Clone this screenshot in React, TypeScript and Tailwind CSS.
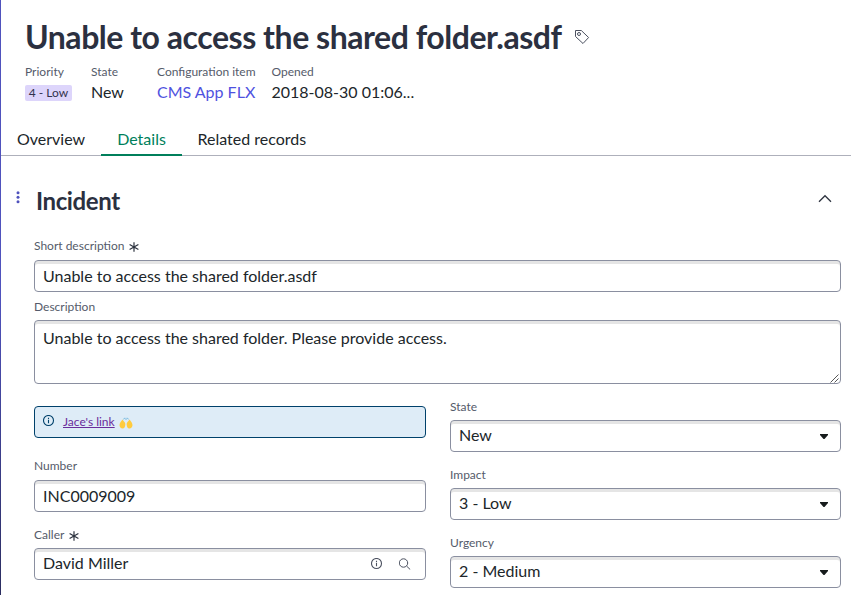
import type { ReactNode } from 'react';

function Required() {
  return (
    <svg width="10" height="10" viewBox="0 0 10 10" className="ml-[4.5px] mt-[2px] shrink-0" fill="none" stroke="#2e3440" strokeWidth="1.2">
      <path d="M5 .2v9.6M.6 2.4l8.8 5.2M9.4 2.4L.6 7.6" />
    </svg>
  );
}

function InfoIcon({ className }: { className: string }) {
  return (
    <svg width="12" height="12" viewBox="0 0 12 12" className={className} fill="none" stroke="currentColor">
      <circle cx="5.5" cy="5.5" r="5" strokeWidth="1.1" />
      <path d="M5.5 4.8v3.4M5.5 2.8v1.200" strokeWidth="1.1" />
    </svg>
  );
}

function Label({ children, required }: { children: ReactNode; required?: boolean }) {
  return (
    <div className="flex h-[14px] items-center text-[12px] leading-[14px] text-[#555b6a]">
      <span>{children}</span>
      {required && <Required />}
    </div>
  );
}

const box = 'flex w-full rounded-[4px] border border-[#8a8fa0] bg-white px-[8px] text-[16px] leading-[30px] text-[#20262a] shadow-[inset_0_3px_0_#e5e5e5]';

function Select({ label, value }: { label: string; value: string }) {
  return (
    <div className="h-[68px]">
      <Label>{label}</Label>
      <div className={`${box} mt-[6px] h-[32px] items-center justify-between pr-[12px]`}>
        <span className="-mt-[2px]">{value}</span>
        <svg width="8" height="5" viewBox="0 0 8 5" className="mt-px" fill="#161b1c">
          <path d="M0 0h8v1L4.5 5h-1L0 1z" />
        </svg>
      </div>
    </div>
  );
}

export default function App() {
  return (
    <div className="flex h-[595px] w-[851px] overflow-hidden bg-white font-['Lato','Noto_Sans',sans-serif] text-[#20262a]">
      <div className="w-px shrink-0 bg-linear-to-b from-[#4f52bd] via-[#4f52bd] to-[#2b2d60]" />
      <main className="min-w-0 flex-1">
        <header className="h-[123px] pl-[24px] pt-[17px]">
          <div className="flex h-[40px] items-center">
            <h1 className="w-[549px] whitespace-nowrap text-[32px] font-bold leading-[40px] tracking-[-0.46px] text-[#2b3040]">Unable to access the shared folder.asdf</h1>
            <svg width="16" height="16" viewBox="0 0 16 16" fill="none" stroke="#4b5160">
              <path d="M1.5 1.5h5.800l7.300 7-5.600 6-7.500-7z" strokeLinejoin="round" />
              <circle cx="5" cy="5" r="1.5" />
            </svg>
          </div>
          <div className="flex pt-[8px] text-[16px] leading-[24px]">
            <div className="w-[66px]">
              <Label>Priority</Label>
              <div className="mt-[6px] h-[16px] w-[47px] whitespace-nowrap rounded-[2px] bg-[#ddd5fb] text-center text-[12px] leading-[16px] text-[#32324d]">4 - Low</div>
            </div>
            <div className="w-[66px]"><Label>State</Label><div className="mt-px">New</div></div>
            <div className="w-[114px]"><Label>Configuration item</Label><div className="mt-px whitespace-nowrap text-[#4f52e0]">CMS App FLX</div></div>
            <div className="pl-[0.5px]"><Label>Opened</Label><div className="mt-px">2018-08-30 01:06...</div></div>
          </div>
        </header>
        <nav className="flex h-[33px] border-b border-[#aeb0bb] text-[16px] leading-[31px]">
          <div className="w-[100px] pl-[16px]">Overview</div>
          <div className="h-[33px] w-[81px] border-b-2 border-[#007f5b] text-center text-[#007f5b]">Details</div>
          <div className="pl-[15.5px]">Related records</div>
        </nav>
        <section className="pl-[33px] pr-[10px] pt-[25px]">
          <div className="-ml-[18px] flex h-[40px] items-center">
            <svg width="4" height="13" viewBox="0 0 4 13" className="-mt-[8px] mr-[16px]" fill="#4f52bd">
              <circle cx="2" cy="1.7" r="1.5" /><circle cx="2" cy="6.2" r="1.5" /><circle cx="2" cy="10.7" r="1.5" />
            </svg>
            <h2 className="flex-1 text-[24px] font-bold leading-[40px] tracking-[-0.4px] text-[#2b3040]">Incident</h2>
            <svg width="14" height="9" viewBox="0 0 14 9" className="-mt-[5px] mr-[9px]" fill="none" stroke="#2e3440" strokeWidth="1.3">
              <path d="M1 7.7l6-6 6 6" />
            </svg>
          </div>
          <div className="pt-[18px]">
            <Label required>Short description</Label>
            <div className={`${box} mt-[7px] h-[32px] items-center`}>Unable to access the shared folder.asdf</div>
          </div>
          <div className="pt-[8px]">
            <Label>Description</Label>
            <div className={`${box} mt-[6px] h-[64px] justify-between pr-[1px] pt-[2px]`}>
              <span>Unable to access the shared folder. Please provide access.</span>
              <svg width="9" height="9" viewBox="0 0 9 9" className="self-end" stroke="#444" strokeWidth=".9">
                <path d="M.5 8.5l8-8M4.5 8.5l4-4" />
              </svg>
            </div>
          </div>
          <div className="flex gap-[24px]">
            <div className="w-[392px] pt-[22px]">
              <div className="flex h-[32px] items-center rounded-[4px] border border-[#00416b] bg-[#deecf7] pl-[8px] text-[12px]">
                <InfoIcon className="-mt-[2px] mr-[8px] text-[#00416b]" />
                <span className="text-[#6a2c9c] underline">Jace's link</span>
                <svg width="14" height="12" viewBox="0 0 14 12" className="ml-[4px] mt-[2px]">
                  <path d="M3.4 2.6L5 4.600c1 .9 1.500 2 1.300 3.200C6.100 10 5.300 11.500 3.700 11.500 1.700 11.500.5 10 .5 8.100.5 6.300 2 4.700 3.400 2.600zM10.600 2.600L9 4.600c-1 .9-1.500 2-1.300 3.200.2 2.200 1 3.700 2.600 3.700 2 0 3.200-1.500 3.200-3.400 0-1.800-1.500-3.400-2.900-5.500z" fill="#ffcb3d" />
                  <path d="M4.300 2.200l1.700-1.200M7 3V.8M9.700 2.200L8 1" stroke="#72b8dc" strokeWidth=".9" />
                </svg>
              </div>
              <div className="pt-[21px]">
                <Label>Number</Label>
                <div className={`${box} mt-[7px] h-[32px] items-center`}>INC0009009</div>
              </div>
              <div className="pt-[16px]">
                <Label required>Caller</Label>
                <div className={`${box} mt-[6px] h-[32px] items-center`}>
                  <span className="-mt-[2px] flex-1">David Miller</span>
                  <InfoIcon className="mr-[16px] text-[#4b5160]" />
                  <svg width="12" height="12" viewBox="0 0 12 12" className="mr-[6px]" fill="none" stroke="#4b5160">
                    <circle cx="4.5" cy="5" r="4.2" /><path d="M7.600 8.100L11.200 11.500" />
                  </svg>
                </div>
              </div>
            </div>
            <div className="flex-1 pt-[16px]">
              <Select label="State" value="New" />
              <Select label="Impact" value="3 - Low" />
              <Select label="Urgency" value="2 - Medium" />
            </div>
          </div>
        </section>
      </main>
    </div>
  );
}
